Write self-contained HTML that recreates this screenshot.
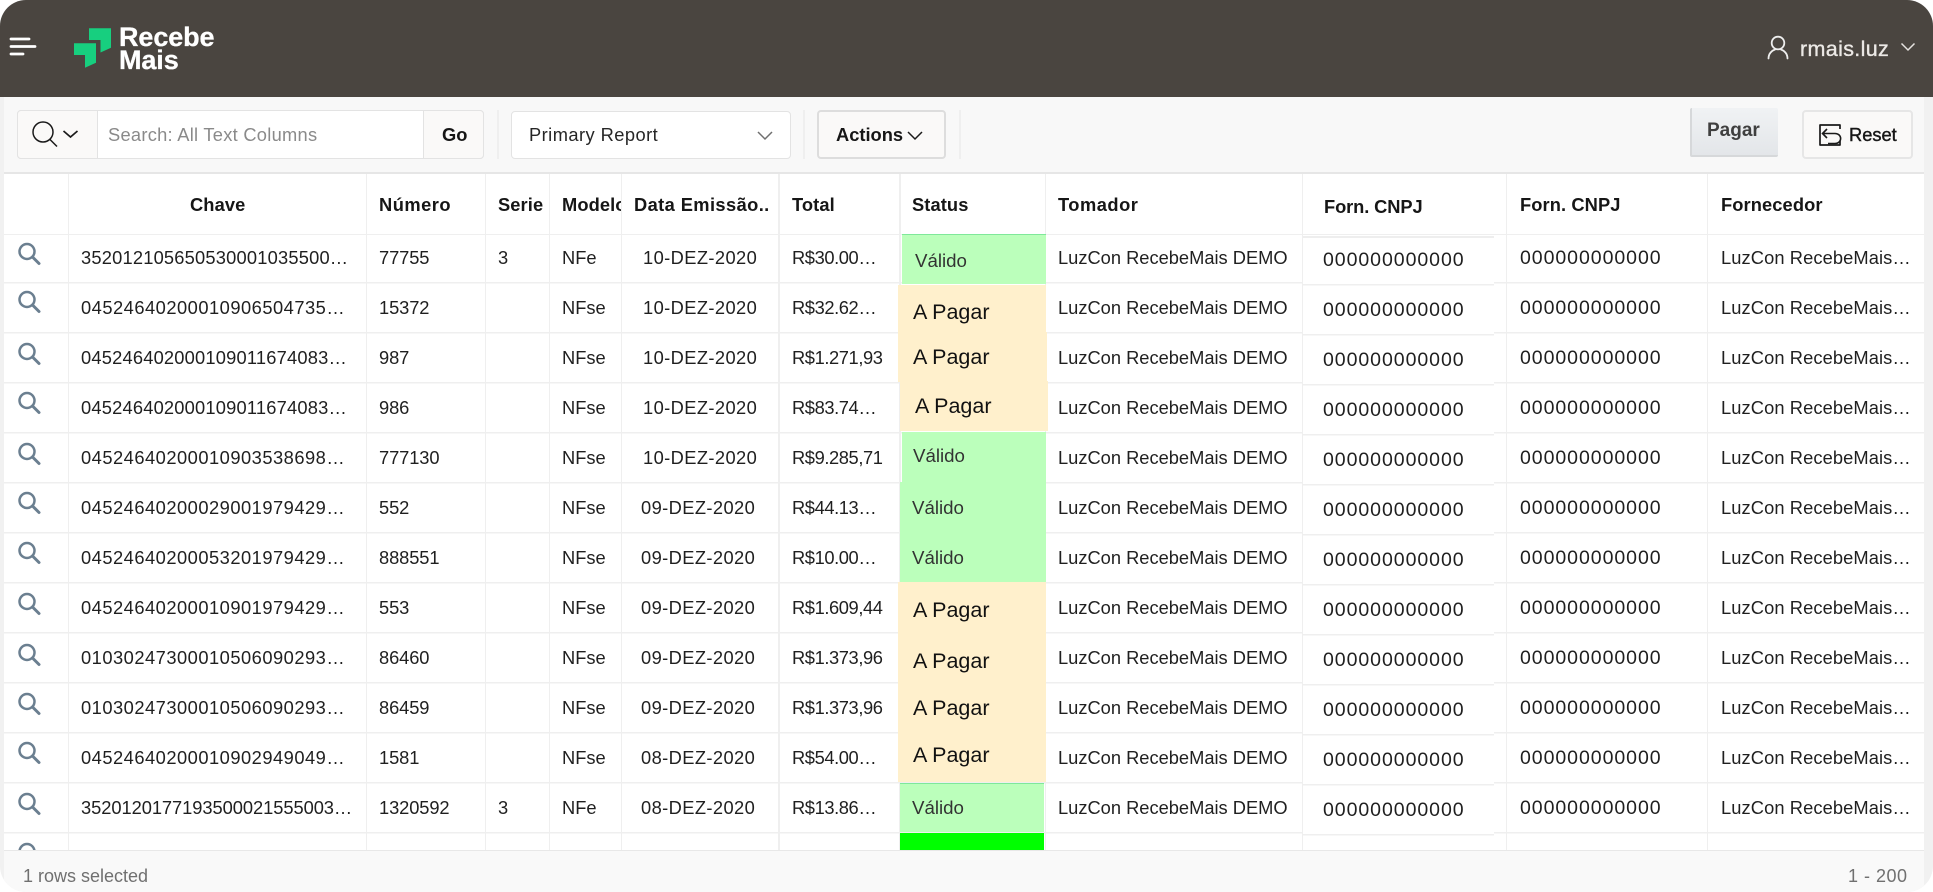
<!DOCTYPE html>
<html lang="pt"><head><meta charset="utf-8"><title>RecebeMais</title>
<style>
html,body{margin:0;padding:0;background:#fff}
body{width:1933px;height:892px;overflow:hidden;position:relative;font-family:"Liberation Sans",sans-serif;color:#1f1f1f;font-size:18.3px}
#app{position:absolute;left:0;top:0;width:1933px;height:892px;background:#f1f1f1;border-radius:26px;overflow:hidden}
#top{position:absolute;left:0;top:0;width:1933px;height:96.5px;background:#4a4540}
#bar{position:absolute;left:4px;top:97px;width:1920px;height:75px;background:#f8f8f8;border-bottom:2px solid #e6e6e6}
#tbl{position:absolute;left:4px;top:174px;width:1920px;height:676px;background:#fff;overflow:hidden}
#foot{position:absolute;left:4px;top:850px;width:1920px;height:42px;background:#f9f9f9;border-top:1.5px solid #e8e8e8;box-sizing:border-box}
.a,.a>*{position:absolute}
.a span,.t{position:absolute;white-space:nowrap;line-height:24px;top:-12px}
.box{position:absolute;box-sizing:border-box;border:1.5px solid #e3e3e3;border-radius:4px;background:#fff}
.g{background:#faf9f8}
.v{position:absolute;top:174px;width:1.5px;height:676px;background:#efefef}
.hl{position:absolute;left:4px;top:282px;width:1920px;height:568px;background:repeating-linear-gradient(to bottom,#efefef 0,#efefef 1.5px,#fff 1.5px,#fff 50px)}
.th{font-weight:bold;font-size:18.3px;color:#161616;letter-spacing:.1px}
.c1{left:81px;letter-spacing:.5px}.c1a{left:81px;letter-spacing:.2px}.c1b{left:81px;letter-spacing:-.05px}.c2{left:379px;letter-spacing:-.1px}.c3{left:498px}.c4{left:562px}
.c5{left:643px;letter-spacing:.4px}.c5b{left:641px;letter-spacing:.4px}.c6{left:792px;letter-spacing:-.4px}
.c8{left:1058px}.c9{left:1323px;font-size:19.5px;letter-spacing:.95px;margin-top:2px}.c10{left:1520px;font-size:19.5px;letter-spacing:.95px}.c11{left:1721px;letter-spacing:.1px}
.st{position:absolute}
.ok{background:#bbffbb}.pg{background:#fff0cc}
.sv{position:absolute;font-size:18.7px;color:#333;line-height:24px;white-space:nowrap}
.sp{position:absolute;font-size:21.5px;color:#111;line-height:24px;white-space:nowrap}
.m{position:absolute;left:17px;width:24px;height:24px}
</style></head><body>
<div id="app">
<div id="top"></div>
<svg style="position:absolute;left:9px;top:36px" width="28" height="22" viewBox="0 0 28 22"><path d="M2 3H20M2 10.500H26M2 18H14" stroke="#fff" stroke-width="2.800" stroke-linecap="round" fill="none"/></svg>
<svg style="position:absolute;left:0;top:0" width="120" height="80" viewBox="0 0 120 80"><path d="M89 28.300H111V47.700L100.500 52.500V40H89Z M74 43.300H96V62.700L85 67.700V55H74Z" fill="#17cf7f"/></svg>
<div style="position:absolute;left:119px;top:26px;font-weight:bold;font-size:27px;line-height:22.500px;color:#fff;letter-spacing:-.1px;-webkit-text-stroke:.3px #fff">Recebe<br>Mais</div>
<svg style="position:absolute;left:1766px;top:35px" width="24" height="25" viewBox="0 0 24 25"><circle cx="12" cy="8" r="6.300" fill="none" stroke="#eee" stroke-width="1.800"/><path d="M2.500 23.500C2.500 18.500 6 15.500 9 14.500M21.500 23.500C21.500 18.500 18 15.500 15 14.500" fill="none" stroke="#eee" stroke-width="1.800" stroke-linecap="round"/></svg>
<div class="t" style="left:1800px;top:37px;font-size:21.5px;color:#ece9e6;letter-spacing:.35px;-webkit-text-stroke:.35px #ece9e6">rmais.luz</div>
<svg style="position:absolute;left:1900px;top:42px" width="16" height="10" viewBox="0 0 16 10"><path d="M1.500 1.500L8 8L14.500 1.500" fill="none" stroke="#e6e3e0" stroke-width="1.500"/></svg>

<div id="bar"></div>
<div class="box" style="left:17px;top:110px;width:467px;height:49px"></div>
<div class="box g" style="left:17px;top:110px;width:81px;height:49px;border-radius:4px 0 0 4px"></div>
<svg style="position:absolute;left:29.500px;top:120px" width="52" height="30" viewBox="0 0 52 30"><circle cx="13" cy="12" r="10" fill="none" stroke="#1a1a1a" stroke-width="1.500"/><path d="M20 19.500L27 26.500" stroke="#1a1a1a" stroke-width="1.500"/><path d="M33.500 11L40.500 17L47.500 11" fill="none" stroke="#1a1a1a" stroke-width="1.700"/></svg>
<div class="t" style="left:108px;top:123px;color:#8a8a8a;letter-spacing:.27px">Search: All Text Columns</div>
<div class="box g" style="left:423px;top:110px;width:61px;height:49px;border-radius:0 4px 4px 0"></div>
<div class="t" style="left:442px;top:123px;font-weight:bold;color:#161616">Go</div>
<div class="v" style="left:497px;top:110px;height:49px"></div>
<div class="box" style="left:511px;top:111px;width:280px;height:48px"></div>
<div class="t" style="left:529px;top:123px;color:#262626;letter-spacing:.45px">Primary Report</div>
<svg style="position:absolute;left:756px;top:130px" width="18" height="12" viewBox="0 0 18 12"><path d="M2 2L9 9L16 2" fill="none" stroke="#6f6f6f" stroke-width="1.500"/></svg>
<div class="v" style="left:803px;top:110px;height:49px"></div>
<div class="box g" style="left:817px;top:110px;width:129px;height:49px;border:2px solid #ddd"></div>
<div class="t" style="left:836px;top:123px;font-weight:bold;color:#161616">Actions</div>
<svg style="position:absolute;left:906px;top:130px" width="18" height="12" viewBox="0 0 18 12"><path d="M2 2L9 9L16 2" fill="none" stroke="#1a1a1a" stroke-width="1.500"/></svg>
<div class="v" style="left:959px;top:110px;height:49px"></div>
<div class="box" style="left:1690px;top:108px;width:88px;height:49px;background:linear-gradient(#f0f2f4,#e3e6e9);border:0;border-left:2px solid #d6d8da;border-bottom:2px solid #d6d8da;border-radius:2px"></div>
<div class="t" style="left:1707px;top:119px;font-weight:bold;font-size:19px;color:#3f3f3f">Pagar</div>
<div class="box g" style="left:1801.500px;top:110px;width:111.500px;height:49px;border:2px solid #e6e6e6"></div>
<svg style="position:absolute;left:1818px;top:123px" width="24" height="24" viewBox="0 0 24 24"><path d="M22 6V2H2V22H22V18" fill="none" stroke="#1a1a1a" stroke-width="1.700" stroke-linejoin="round"/><path d="M9 6L4.500 10.500L9 15M5 10.500H17C24.500 10.500 24.500 20.500 17 20.500H10" fill="none" stroke="#1a1a1a" stroke-width="1.600"/></svg>
<div class="t" style="left:1849px;top:123px;font-size:18.300px;color:#161616;-webkit-text-stroke:.4px #161616">Reset</div>

<div id="tbl"></div>
<div style="position:absolute;left:4px;top:233.500px;width:1920px;height:1.5px;background:#efefef"></div>
<div class="hl"></div>
<div style="position:absolute;left:1302px;top:235px;width:192px;height:615px;background:#fff"></div>
<div style="position:absolute;left:1302px;top:236px;width:192px;height:1.5px;background:#eee"></div>
<div style="position:absolute;left:1302px;top:283.500px;width:192px;height:566.5px;background:repeating-linear-gradient(to bottom,#efefef 0,#efefef 1.5px,#fff 1.5px,#fff 50px)"></div>
<div class="v" style="left:67.500px"></div><div class="v" style="left:365.500px"></div><div class="v" style="left:484.500px"></div><div class="v" style="left:548.500px"></div><div class="v" style="left:620.500px"></div><div class="v" style="left:778px"></div><div class="v" style="left:899px"></div><div class="v" style="left:1044.500px"></div><div class="v" style="left:1301.500px"></div><div class="v" style="left:1505.500px"></div><div class="v" style="left:1706.500px"></div>

<!-- status cells -->
<div class="st ok" style="left:902px;top:234px;width:144px;height:50px;border-top:1.500px solid #7fe89a;box-sizing:border-box"></div>
<div class="st pg" style="left:898px;top:285px;width:148px;height:48px"></div>
<div class="st pg" style="left:898px;top:332px;width:149px;height:50px"></div>
<div class="st pg" style="left:900px;top:381px;width:148px;height:50px"></div>
<div class="st ok" style="left:902px;top:432px;width:144px;height:50px"></div>
<div class="st ok" style="left:900px;top:482px;width:146px;height:50px"></div>
<div class="st ok" style="left:900px;top:532px;width:146px;height:50px"></div>
<div class="st pg" style="left:898px;top:582px;width:148px;height:200px"></div>
<div class="st ok" style="left:900px;top:783px;width:144px;height:49px;border-top:1.500px solid #7fe89a;box-sizing:border-box"></div>
<div class="st" style="left:900px;top:833px;width:144px;height:17px;background:#00ff00"></div>

<!-- magnifier icons -->
<svg width="0" height="0" style="position:absolute"><defs><g id="mg"><circle cx="10" cy="9.500" r="7.500" fill="none" stroke="#6b7f90" stroke-width="2.500"/><path d="M15.500 15L22 21.500" stroke="#6b7f90" stroke-width="3" stroke-linecap="round"/></g></defs></svg>
<svg class="m" style="top:242px" viewBox="0 0 24 24"><use href="#mg"/></svg>
<svg class="m" style="top:290px" viewBox="0 0 24 24"><use href="#mg"/></svg>
<svg class="m" style="top:342px" viewBox="0 0 24 24"><use href="#mg"/></svg>
<svg class="m" style="top:391px" viewBox="0 0 24 24"><use href="#mg"/></svg>
<svg class="m" style="top:442px" viewBox="0 0 24 24"><use href="#mg"/></svg>
<svg class="m" style="top:491px" viewBox="0 0 24 24"><use href="#mg"/></svg>
<svg class="m" style="top:541px" viewBox="0 0 24 24"><use href="#mg"/></svg>
<svg class="m" style="top:592px" viewBox="0 0 24 24"><use href="#mg"/></svg>
<svg class="m" style="top:643px" viewBox="0 0 24 24"><use href="#mg"/></svg>
<svg class="m" style="top:692px" viewBox="0 0 24 24"><use href="#mg"/></svg>
<svg class="m" style="top:741px" viewBox="0 0 24 24"><use href="#mg"/></svg>
<svg class="m" style="top:792px" viewBox="0 0 24 24"><use href="#mg"/></svg>
<svg class="m" style="top:842px" viewBox="0 0 24 24"><use href="#mg"/></svg>

<!-- header -->
<div class="a th" style="left:0;top:205px">
<span style="left:190px">Chave</span><span style="left:379px;letter-spacing:.5px">Número</span><span style="left:498px">Serie</span>
<span style="left:562px;width:59px;overflow:hidden">Modelo</span><span style="left:634px;letter-spacing:.4px">Data Emissão..</span><span style="left:792px">Total</span>
<span style="left:912px">Status</span><span style="left:1058px;letter-spacing:.5px">Tomador</span><span style="left:1324px;margin-top:2px;letter-spacing:-.1px">Forn. CNPJ</span><span style="left:1520px">Forn. CNPJ</span><span style="left:1721px">Fornecedor</span>
</div>

<!-- rows -->
<div class="a" style="left:0;top:258px"><span class="c1a">352012105650530001035500…</span><span class="c2">77755</span><span class="c3">3</span><span class="c4">NFe</span><span class="c5">10-DEZ-2020</span><span class="c6">R$30.00…</span><span class="c8">LuzCon RecebeMais DEMO</span><span class="c9">000000000000</span><span class="c10">000000000000</span><span class="c11">LuzCon RecebeMais…</span></div>
<div class="a" style="left:0;top:308px"><span class="c1">04524640200010906504735…</span><span class="c2">15372</span><span class="c4">NFse</span><span class="c5">10-DEZ-2020</span><span class="c6">R$32.62…</span><span class="c8">LuzCon RecebeMais DEMO</span><span class="c9">000000000000</span><span class="c10">000000000000</span><span class="c11">LuzCon RecebeMais…</span></div>
<div class="a" style="left:0;top:358px"><span class="c1a">045246402000109011674083…</span><span class="c2">987</span><span class="c4">NFse</span><span class="c5">10-DEZ-2020</span><span class="c6">R$1.271,93</span><span class="c8">LuzCon RecebeMais DEMO</span><span class="c9">000000000000</span><span class="c10">000000000000</span><span class="c11">LuzCon RecebeMais…</span></div>
<div class="a" style="left:0;top:408px"><span class="c1a">045246402000109011674083…</span><span class="c2">986</span><span class="c4">NFse</span><span class="c5">10-DEZ-2020</span><span class="c6">R$83.74…</span><span class="c8">LuzCon RecebeMais DEMO</span><span class="c9">000000000000</span><span class="c10">000000000000</span><span class="c11">LuzCon RecebeMais…</span></div>
<div class="a" style="left:0;top:458px"><span class="c1">04524640200010903538698…</span><span class="c2">777130</span><span class="c4">NFse</span><span class="c5">10-DEZ-2020</span><span class="c6">R$9.285,71</span><span class="c8">LuzCon RecebeMais DEMO</span><span class="c9">000000000000</span><span class="c10">000000000000</span><span class="c11">LuzCon RecebeMais…</span></div>
<div class="a" style="left:0;top:508px"><span class="c1">04524640200029001979429…</span><span class="c2">552</span><span class="c4">NFse</span><span class="c5b">09-DEZ-2020</span><span class="c6">R$44.13…</span><span class="c8">LuzCon RecebeMais DEMO</span><span class="c9">000000000000</span><span class="c10">000000000000</span><span class="c11">LuzCon RecebeMais…</span></div>
<div class="a" style="left:0;top:558px"><span class="c1">04524640200053201979429…</span><span class="c2">888551</span><span class="c4">NFse</span><span class="c5b">09-DEZ-2020</span><span class="c6">R$10.00…</span><span class="c8">LuzCon RecebeMais DEMO</span><span class="c9">000000000000</span><span class="c10">000000000000</span><span class="c11">LuzCon RecebeMais…</span></div>
<div class="a" style="left:0;top:608px"><span class="c1">04524640200010901979429…</span><span class="c2">553</span><span class="c4">NFse</span><span class="c5b">09-DEZ-2020</span><span class="c6">R$1.609,44</span><span class="c8">LuzCon RecebeMais DEMO</span><span class="c9">000000000000</span><span class="c10">000000000000</span><span class="c11">LuzCon RecebeMais…</span></div>
<div class="a" style="left:0;top:658px"><span class="c1">01030247300010506090293…</span><span class="c2">86460</span><span class="c4">NFse</span><span class="c5b">09-DEZ-2020</span><span class="c6">R$1.373,96</span><span class="c8">LuzCon RecebeMais DEMO</span><span class="c9">000000000000</span><span class="c10">000000000000</span><span class="c11">LuzCon RecebeMais…</span></div>
<div class="a" style="left:0;top:708px"><span class="c1">01030247300010506090293…</span><span class="c2">86459</span><span class="c4">NFse</span><span class="c5b">09-DEZ-2020</span><span class="c6">R$1.373,96</span><span class="c8">LuzCon RecebeMais DEMO</span><span class="c9">000000000000</span><span class="c10">000000000000</span><span class="c11">LuzCon RecebeMais…</span></div>
<div class="a" style="left:0;top:758px"><span class="c1">04524640200010902949049…</span><span class="c2">1581</span><span class="c4">NFse</span><span class="c5b">08-DEZ-2020</span><span class="c6">R$54.00…</span><span class="c8">LuzCon RecebeMais DEMO</span><span class="c9">000000000000</span><span class="c10">000000000000</span><span class="c11">LuzCon RecebeMais…</span></div>
<div class="a" style="left:0;top:808px"><span class="c1b">3520120177193500021555003…</span><span class="c2">1320592</span><span class="c3">3</span><span class="c4">NFe</span><span class="c5b">08-DEZ-2020</span><span class="c6">R$13.86…</span><span class="c8">LuzCon RecebeMais DEMO</span><span class="c9">000000000000</span><span class="c10">000000000000</span><span class="c11">LuzCon RecebeMais…</span></div>
<div class="a" style="left:0;top:858px"><span class="c6">R$</span></div>

<!-- status text -->
<div class="sv" style="left:915px;top:249px">Válido</div>
<div class="sp" style="left:913px;top:300px">A Pagar</div>
<div class="sp" style="left:913px;top:345px">A Pagar</div>
<div class="sp" style="left:915px;top:394px">A Pagar</div>
<div class="sv" style="left:913px;top:444px">Válido</div>
<div class="sv" style="left:912px;top:496px">Válido</div>
<div class="sv" style="left:912px;top:546px">Válido</div>
<div class="sp" style="left:913px;top:598px">A Pagar</div>
<div class="sp" style="left:913px;top:649px">A Pagar</div>
<div class="sp" style="left:913px;top:696px">A Pagar</div>
<div class="sp" style="left:913px;top:743px">A Pagar</div>
<div class="sv" style="left:912px;top:796px">Válido</div>

<div id="foot"></div>
<div class="t" style="left:23px;top:864px;color:#707070;font-size:18px">1 rows selected</div>
<div class="t" style="left:1848px;top:864px;color:#707070;font-size:18px;letter-spacing:.5px">1 - 200</div>
</div>
</body></html>
